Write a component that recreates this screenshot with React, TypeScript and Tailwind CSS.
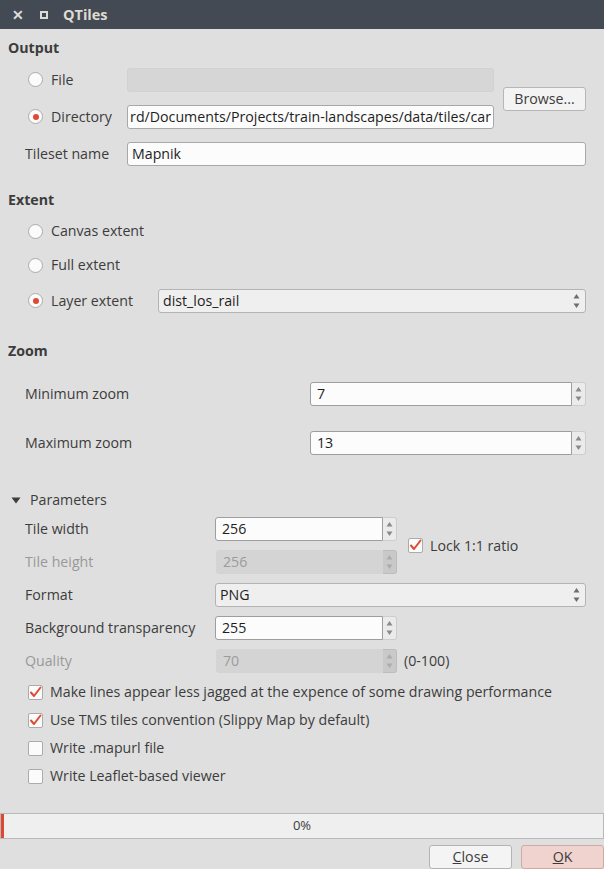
import React from "react";

const font = { fontFamily: '"Open Sans", "Noto Sans", sans-serif' };

function Radio({ checked }: { checked?: boolean }) {
  return (
    <div className="w-[15px] h-[15px] rounded-full bg-[#fbfbfb] border border-[#ababab] flex items-center justify-center shrink-0">
      {checked && <div className="w-[6px] h-[6px] rounded-full bg-[#df4a33]" />}
    </div>
  );
}

function Check({ checked }: { checked?: boolean }) {
  return (
    <div className="w-[15px] h-[15px] rounded-[2px] bg-[#fbfbfb] border border-[#ababab] flex items-center justify-center shrink-0">
      {checked && (
        <svg width="13" height="13" viewBox="0 0 13 13">
          <path d="M2 6.5 L5 10 L11.5 1.5" fill="none" stroke="#df4a33" strokeWidth="2" strokeLinecap="round" strokeLinejoin="round" />
        </svg>
      )}
    </div>
  );
}

function Arrows({ color }: { color: string }) {
  return (
    <svg width="7" height="18" viewBox="0 0 7 18">
      <path d="M3.5 2 L6.5 6.5 L0.5 6.5 Z" fill={color} />
      <path d="M0.5 11.5 L6.5 11.5 L3.5 16 Z" fill={color} />
    </svg>
  );
}

function Spin({ value, w, disabled }: { value: string; w: string; disabled?: boolean }) {
  return (
    <div className={`flex h-[24px] ${w}`}>
      <div
        className={`flex-1 flex items-center pl-[6px] rounded-l-[3px] border ${
          disabled ? "bg-[#d4d4d4] border-[#d4d4d4] text-[#9c9c9c]" : "bg-[#fcfcfc] border-[#9e9e9e] text-[#1e1e1e]"
        }`}
      >
        {value}
      </div>
      <div
        className={`w-[14px] flex items-center justify-center rounded-r-[3px] border border-l-0 ${
          disabled ? "bg-[#c9c9c9] border-[#bdbdbd]" : "bg-[#ebebeb] border-[#cdcdcd]"
        }`}
      >
        <Arrows color={disabled ? "#acacac" : "#8a8a8a"} />
      </div>
    </div>
  );
}

function Combo({ value, className }: { value: string; className: string }) {
  return (
    <div className={`h-[24px] flex items-center justify-between pl-[4px] pr-[5px] bg-[#efefef] border border-[#b3b3b3] rounded-[3px] text-[#1e1e1e] ${className}`}>
      <span>{value}</span>
      <Arrows color="#6e6e6e" />
    </div>
  );
}

export default function App() {
  return (
    <div className="w-[604px] h-[869px] bg-[#dfdfdf] flex flex-col text-[14.2px] text-[#3c3c3c] overflow-hidden" style={font}>
      {/* title bar */}
      <div className="h-[29px] bg-[#434a54] flex items-center shrink-0">
        <span className="ml-[12px] text-[#dcdcdc] text-[14px] font-bold leading-none">✕</span>
        <div className="ml-[16px] w-[8px] h-[8px] border-[2px] border-[#dcdcdc]" />
        <span className="ml-[15px] text-[#dfdbd2] font-bold text-[14.5px]">QTiles</span>
      </div>

      <div className="flex flex-col">
        {/* Output */}
        <div className="mt-[9px] h-[20px] pl-[8px] flex items-center font-bold">Output</div>

        <div className="mt-[10px] flex items-center pr-[18px]">
          <div className="flex flex-col gap-[13px]">
            <div className="h-[24px] flex items-center">
              <div className="w-[127px] flex items-center pl-[28px] gap-[8px]">
                <Radio />
                <span>File</span>
              </div>
              <div className="w-[367px] h-[24px] bg-[#d6d6d6] rounded-[3px] border border-[#d2d2d2]" />
            </div>
            <div className="h-[24px] flex items-center">
              <div className="w-[127px] flex items-center pl-[28px] gap-[8px]">
                <Radio checked />
                <span>Directory</span>
              </div>
              <div className="w-[367px] h-[24px] bg-[#fcfcfc] rounded-[3px] border border-[#a8a8a8] flex items-center justify-end overflow-hidden text-[#1e1e1e] whitespace-nowrap">
                <span className="pr-[2px] shrink-0">rd/Documents/Projects/train-landscapes/data/tiles/car</span>
              </div>
            </div>
          </div>
          <div className="ml-[9px] w-[83px] h-[24px] flex items-center justify-center bg-[#f3f3f3] border border-[#b6b6b6] rounded-[3px] text-[#3c3c3c]">
            Browse...
          </div>
        </div>

        <div className="mt-[13px] h-[24px] flex items-center pr-[18px]">
          <div className="w-[127px] pl-[25px]">Tileset name</div>
          <div className="flex-1 h-[24px] bg-[#fcfcfc] rounded-[3px] border border-[#a8a8a8] flex items-center pl-[4px] text-[#1e1e1e]">Mapnik</div>
        </div>

        {/* Extent */}
        <div className="mt-[24px] h-[20px] pl-[8px] flex items-center font-bold">Extent</div>
        <div className="mt-[9px] h-[24px] flex items-center pl-[28px] gap-[8px]">
          <Radio />
          <span>Canvas extent</span>
        </div>
        <div className="mt-[10px] h-[24px] flex items-center pl-[28px] gap-[8px]">
          <Radio />
          <span>Full extent</span>
        </div>
        <div className="mt-[12px] h-[24px] flex items-center pr-[18px]">
          <div className="w-[158px] flex items-center pl-[28px] gap-[8px]">
            <Radio checked />
            <span>Layer extent</span>
          </div>
          <Combo value="dist_los_rail" className="flex-1" />
        </div>

        {/* Zoom */}
        <div className="mt-[28px] h-[20px] pl-[8px] flex items-center font-bold">Zoom</div>
        <div className="mt-[21px] h-[24px] flex items-center pr-[18px]">
          <div className="w-[310px] pl-[25px]">Minimum zoom</div>
          <Spin value="7" w="flex-1" />
        </div>
        <div className="mt-[25px] h-[24px] flex items-center pr-[18px]">
          <div className="w-[310px] pl-[25px]">Maximum zoom</div>
          <Spin value="13" w="flex-1" />
        </div>

        {/* Parameters */}
        <div className="mt-[35px] h-[20px] flex items-center pl-[11px]">
          <svg width="10" height="7" viewBox="0 0 10 7" className="mr-[9px]">
            <path d="M0.5 0.5 L9.5 0.5 L5 6.5 Z" fill="#3c3c3c" />
          </svg>
          <span>Parameters</span>
        </div>

        <div className="mt-[7px] flex">
          <div className="flex flex-col gap-[9px]">
            <div className="h-[24px] flex items-center">
              <div className="w-[215px] pl-[25px]">Tile width</div>
              <Spin value="256" w="w-[182px]" />
            </div>
            <div className="h-[24px] flex items-center">
              <div className="w-[216px] pl-[25px] text-[#999999]">Tile height</div>
              <Spin value="256" w="w-[181px]" disabled />
            </div>
          </div>
          <div className="ml-[11px] flex items-center gap-[7px]">
            <Check checked />
            <span>Lock 1:1 ratio</span>
          </div>
        </div>

        <div className="mt-[9px] h-[24px] flex items-center pr-[18px]">
          <div className="w-[215px] pl-[25px]">Format</div>
          <Combo value="PNG" className="flex-1" />
        </div>
        <div className="mt-[9px] h-[24px] flex items-center">
          <div className="w-[215px] pl-[25px]">Background transparency</div>
          <Spin value="255" w="w-[182px]" />
        </div>
        <div className="mt-[9px] h-[24px] flex items-center">
          <div className="w-[216px] pl-[25px] text-[#999999]">Quality</div>
          <Spin value="70" w="w-[181px]" disabled />
          <span className="ml-[7px]">(0-100)</span>
        </div>

        <div className="mt-[5px] flex flex-col">
          {[
            ["Make lines appear less jagged at the expence of some drawing performance", true],
            ["Use TMS tiles convention (Slippy Map by default)", true],
            ["Write .mapurl file", false],
            ["Write Leaflet-based viewer", false],
          ].map(([t, c]) => (
            <div key={t as string} className="h-[28px] flex items-center pl-[28px] gap-[7px]">
              <Check checked={c as boolean} />
              <span>{t as string}</span>
            </div>
          ))}
        </div>

        {/* progress */}
        <div className="mt-[23px] h-[26px] w-full bg-[#efefef] border border-[#b9b9b9] relative flex items-center justify-center text-[13px]">
          <div className="absolute left-0 top-0 bottom-0 w-[3px] bg-[#dd4733]" />
          <span>0%</span>
        </div>

        <div className="mt-[6px] flex justify-end gap-[9px]">
          <div className="w-[83px] h-[24px] bg-[#f4f4f4] border border-[#b4b4b4] rounded-[3px] flex items-center justify-center">
            <span><span className="underline">C</span>lose</span>
          </div>
          <div className="w-[83px] h-[24px] bg-[#f0d2ce] border border-[#cfaaa5] rounded-[3px] flex items-center justify-center">
            <span><span className="underline">O</span>K</span>
          </div>
        </div>
      </div>
    </div>
  );
}
